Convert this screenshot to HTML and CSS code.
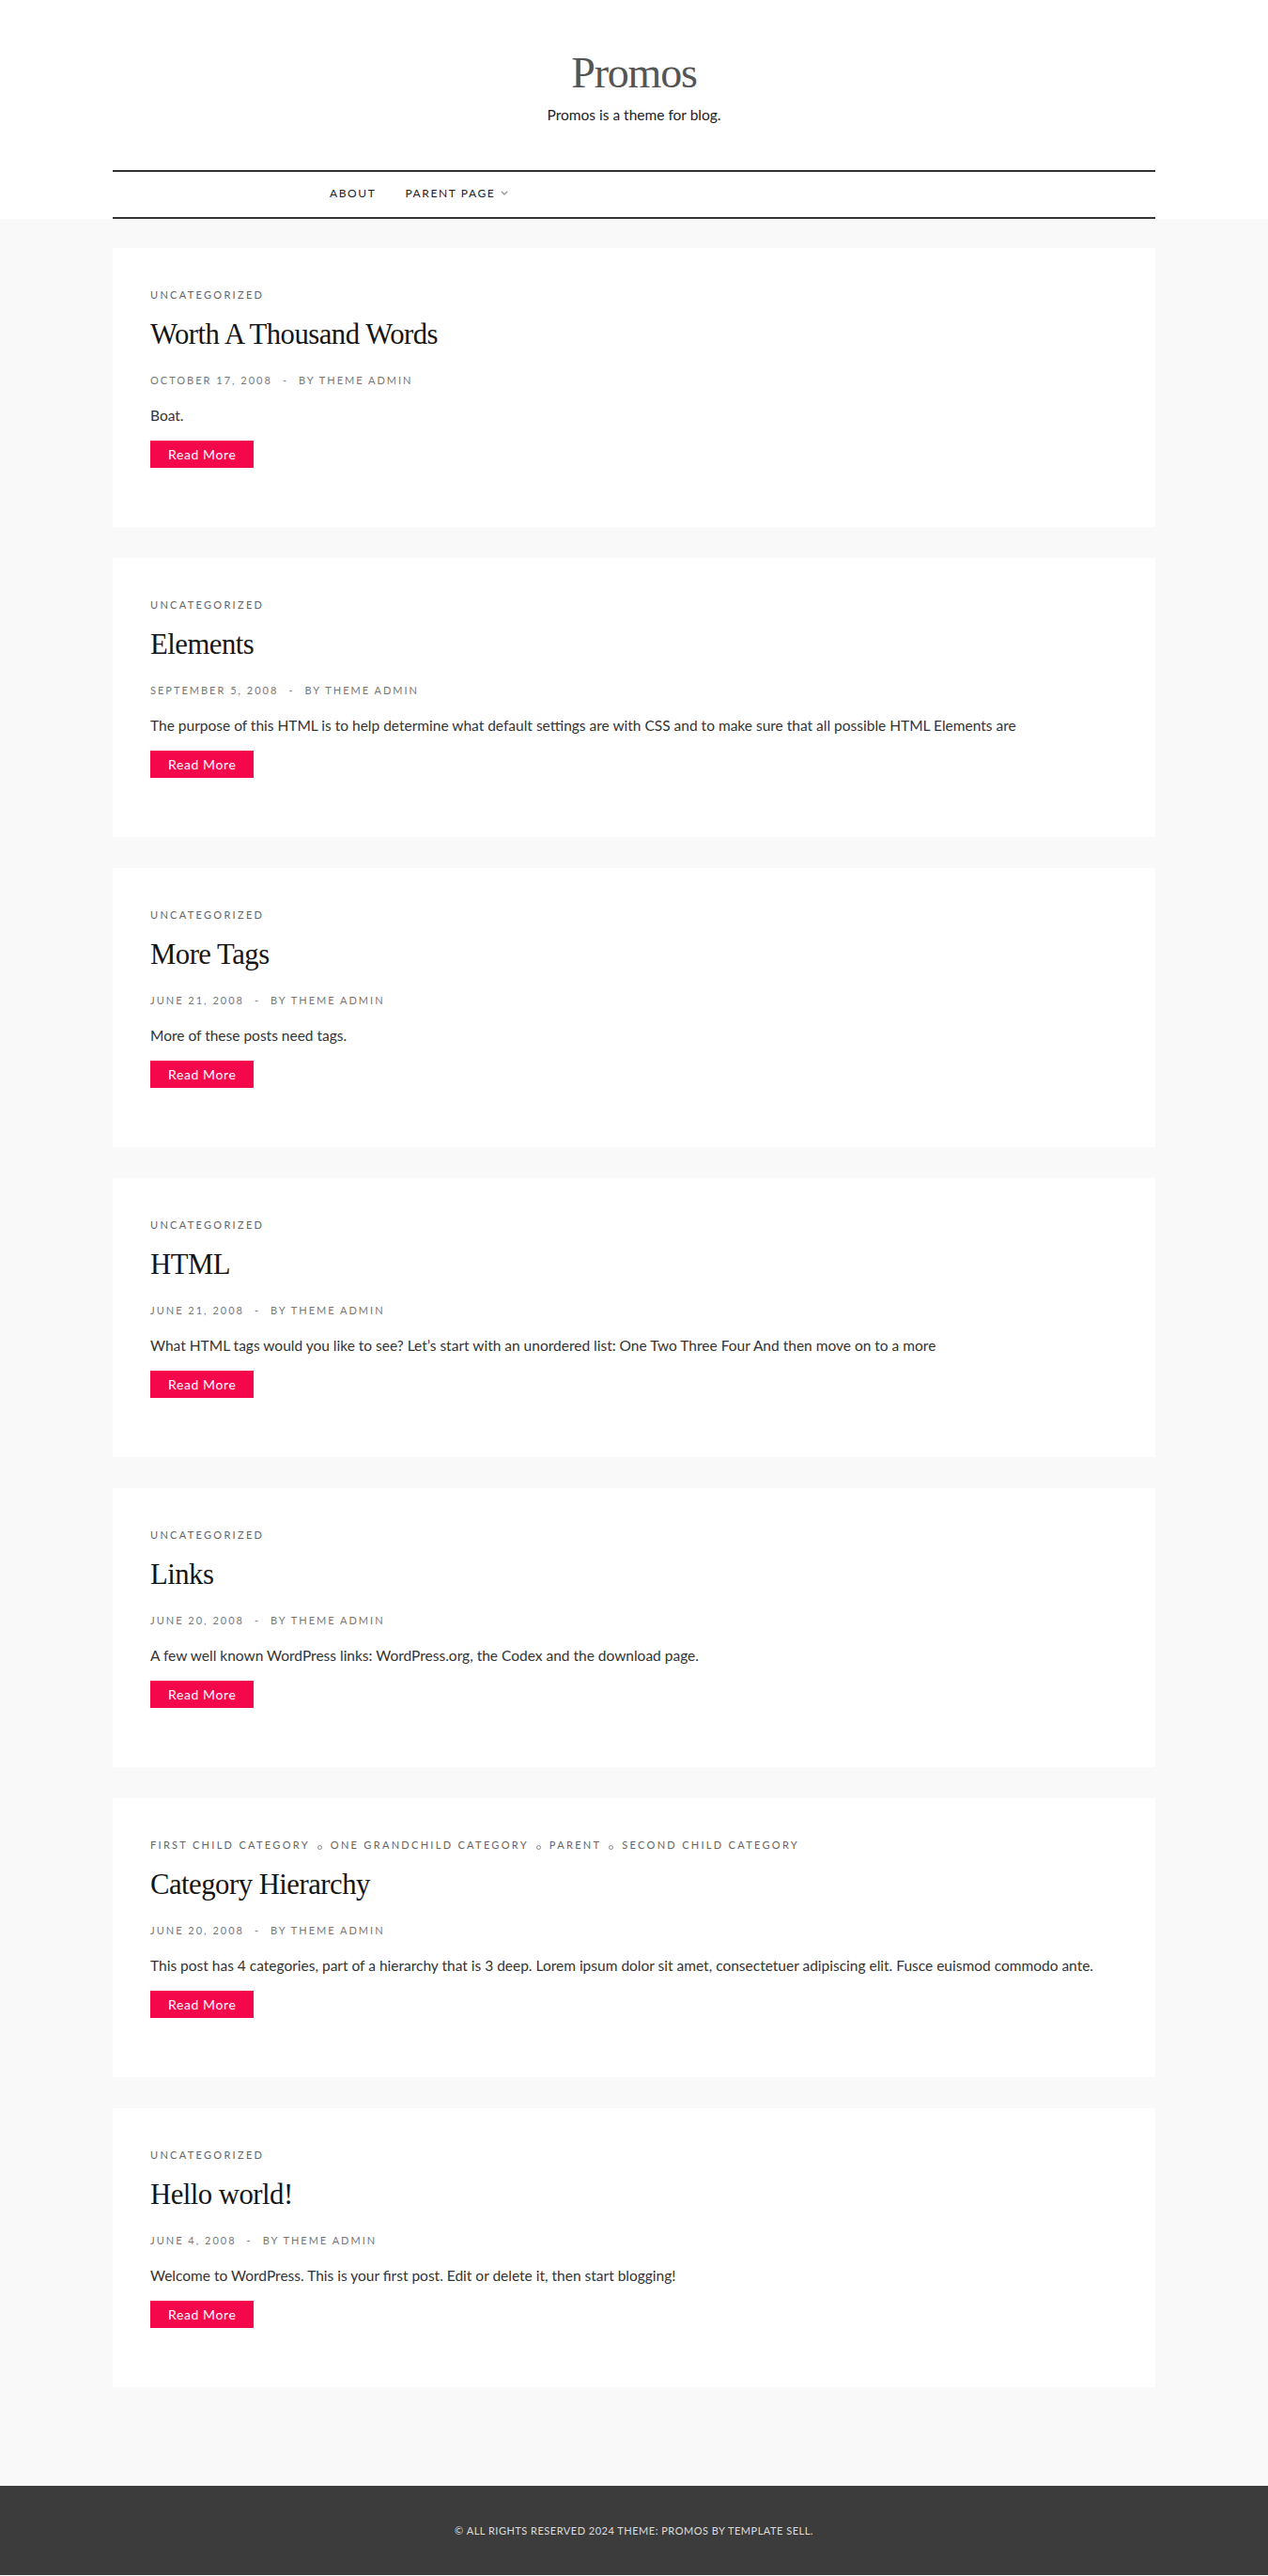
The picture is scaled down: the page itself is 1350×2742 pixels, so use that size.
FILE: index.html
```html
<!DOCTYPE html>
<html lang="en">
<head>
<meta charset="utf-8">
<title>Promos</title>
<link rel="stylesheet" href="styles.css">
</head>
<body>
<header class="site-header">
  <div class="branding">
    <h1 class="site-title">Promos</h1>
    <p class="site-desc">Promos is a theme for blog.</p>
  </div>
  <nav class="main-nav">
    <ul class="menu">
      <li class="menu-item">ABOUT</li>
      <li class="menu-item">PARENT PAGE
        <svg class="chev" width="8" height="5" viewBox="0 0 8 5"><path d="M0.8 0.8 L4 4 L7.2 0.8" fill="none" stroke="#999" stroke-width="1.4"/></svg>
      </li>
    </ul>
  </nav>
</header>

<main class="content">
  <article class="post">
    <div class="cats">UNCATEGORIZED</div>
    <h2 class="post-title">Worth A Thousand Words</h2>
    <div class="meta"><span>OCTOBER 17, 2008</span><span class="dash">-</span><span>BY THEME ADMIN</span></div>
    <p class="excerpt">Boat.</p>
    <a class="btn">Read More</a>
  </article>

  <article class="post">
    <div class="cats">UNCATEGORIZED</div>
    <h2 class="post-title">Elements</h2>
    <div class="meta"><span>SEPTEMBER 5, 2008</span><span class="dash">-</span><span>BY THEME ADMIN</span></div>
    <p class="excerpt">The purpose of this HTML is to help determine what default settings are with CSS and to make sure that all possible HTML Elements are</p>
    <a class="btn">Read More</a>
  </article>

  <article class="post">
    <div class="cats">UNCATEGORIZED</div>
    <h2 class="post-title">More Tags</h2>
    <div class="meta"><span>JUNE 21, 2008</span><span class="dash">-</span><span>BY THEME ADMIN</span></div>
    <p class="excerpt">More of these posts need tags.</p>
    <a class="btn">Read More</a>
  </article>

  <article class="post">
    <div class="cats">UNCATEGORIZED</div>
    <h2 class="post-title">HTML</h2>
    <div class="meta"><span>JUNE 21, 2008</span><span class="dash">-</span><span>BY THEME ADMIN</span></div>
    <p class="excerpt">What HTML tags would you like to see? Let’s start with an unordered list: One Two Three Four And then move on to a more</p>
    <a class="btn">Read More</a>
  </article>

  <article class="post">
    <div class="cats">UNCATEGORIZED</div>
    <h2 class="post-title">Links</h2>
    <div class="meta"><span>JUNE 20, 2008</span><span class="dash">-</span><span>BY THEME ADMIN</span></div>
    <p class="excerpt">A few well known WordPress links: WordPress.org, the Codex and the download page.</p>
    <a class="btn">Read More</a>
  </article>

  <article class="post">
    <div class="cats">FIRST CHILD CATEGORY<span class="sep"></span>ONE GRANDCHILD CATEGORY<span class="sep"></span>PARENT<span class="sep"></span>SECOND CHILD CATEGORY</div>
    <h2 class="post-title">Category Hierarchy</h2>
    <div class="meta"><span>JUNE 20, 2008</span><span class="dash">-</span><span>BY THEME ADMIN</span></div>
    <p class="excerpt">This post has 4 categories, part of a hierarchy that is 3 deep. Lorem ipsum dolor sit amet, consectetuer adipiscing elit. Fusce euismod commodo ante.</p>
    <a class="btn">Read More</a>
  </article>

  <article class="post">
    <div class="cats">UNCATEGORIZED</div>
    <h2 class="post-title">Hello world!</h2>
    <div class="meta"><span>JUNE 4, 2008</span><span class="dash">-</span><span>BY THEME ADMIN</span></div>
    <p class="excerpt">Welcome to WordPress. This is your first post. Edit or delete it, then start blogging!</p>
    <a class="btn">Read More</a>
  </article>
</main>

<footer class="site-footer">
  <p class="copy">© ALL RIGHTS RESERVED 2024 THEME: PROMOS BY TEMPLATE SELL.</p>
</footer>
</body>
</html>
```

FILE: styles.css
```css
html, body {
  margin: 0;
  padding: 0;
}
body {
  background: #f9f9f9;
  font-family: Lato, "Liberation Sans", sans-serif;
  color: #333;
}

.site-header {
  background: #fff;
  padding-top: 50px;
}
.branding {
  text-align: center;
}
.site-title {
  margin: 0;
  font-family: "Liberation Serif", serif;
  font-weight: normal;
  font-size: 46px;
  line-height: 56px;
  letter-spacing: -1.2px;
  color: #555;
}
.site-desc {
  margin: 5px 0 0;
  font-size: 15.5px;
  line-height: 22px;
  color: #222;
}

.main-nav {
  width: 1110px;
  margin: 48px auto 0;
  border-top: 2px solid #333;
  border-bottom: 2px solid #333;
}
.menu {
  list-style: none;
  margin: 0;
  padding: 14px 0 16px 231px;
  display: flex;
  gap: 31px;
}
.menu-item {
  font-size: 12px;
  line-height: 18px;
  letter-spacing: 1.6px;
  color: #222;
  display: flex;
  align-items: center;
}
.chev {
  margin-left: 6px;
  margin-top: -2px;
}

.content {
  width: 1110px;
  margin: 0 auto;
  padding: 31px 0 105px;
  display: flex;
  flex-direction: column;
  gap: 33px;
}
.post {
  background: #fff;
  padding: 42px 40px 63px;
  display: flex;
  flex-direction: column;
  align-items: flex-start;
}
.cats {
  font-size: 11px;
  line-height: 16px;
  letter-spacing: 2.3px;
  color: #666;
  display: flex;
  align-items: baseline;
}
.sep {
  display: inline-block;
  width: 3px;
  height: 3px;
  border: 1px solid #888;
  border-radius: 50%;
  margin: 0 9px 3px 8px;
  align-self: flex-end;
}
.post-title {
  margin: 14px 0 0;
  font-family: "Liberation Serif", serif;
  font-weight: normal;
  font-size: 30.7px;
  line-height: 40px;
  letter-spacing: -0.5px;
  color: #151515;
}
.meta {
  margin-top: 21px;
  font-size: 11px;
  line-height: 16px;
  letter-spacing: 2px;
  color: #777;
  display: flex;
}
.dash {
  margin: 0 11px;
}
.excerpt {
  margin: 17px 0 0;
  font-size: 15.5px;
  line-height: 24px;
  color: #333;
}
.btn {
  margin-top: 15px;
  display: inline-block;
  background: #f5074b;
  color: #fff;
  font-size: 14px;
  line-height: 17px;
  letter-spacing: 0.6px;
  padding: 6px 19px;
}

.site-footer {
  background: #3c3c3c;
  height: 95px;
  display: flex;
  align-items: center;
  justify-content: center;
}
.copy {
  margin: 0;
  font-size: 11px;
  line-height: 16px;
  letter-spacing: 0.5px;
  color: #ddd;
}
```
